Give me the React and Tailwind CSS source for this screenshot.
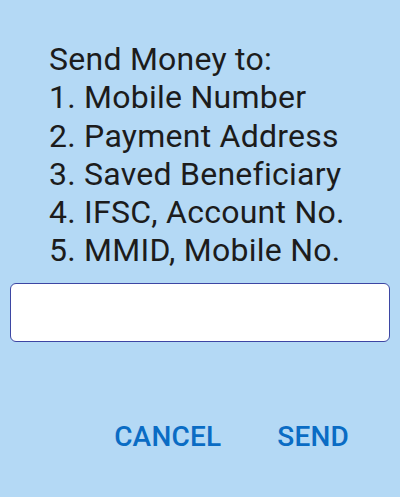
export default function App() {
  const lines = [
    "Send Money to:",
    "1. Mobile Number",
    "2. Payment Address",
    "3. Saved Beneficiary",
    "4. IFSC, Account No.",
    "5. MMID, Mobile No.",
  ];

  return (
    <div className="w-[400px] h-[497px] bg-[#b4d9f5] flex flex-col font-['Roboto',sans-serif]">
      {/* Prompt text */}
      <div className="pt-[40px] pl-[49px] text-[32px] leading-[38.3px] tracking-[0.25px] text-[#1c1c1c]">
        {lines.map((l) => (
          <div key={l}>{l}</div>
        ))}
      </div>

      {/* Input */}
      <div className="px-[10px] mt-[13px]">
        <input
          type="text"
          className="w-full h-[59px] bg-white border-[1.5px] border-[#3d46a3] rounded-[6px] outline-none px-3 text-[20px]"
        />
      </div>

      {/* Actions */}
      <div className="flex justify-end items-center gap-[56px] pr-[51px] mt-[74px]">
        <button className="text-[28px] font-medium text-[#0a6cc4] tracking-[0.2px]">CANCEL</button>
        <button className="text-[28px] font-medium text-[#0a6cc4] tracking-[0.2px]">SEND</button>
      </div>
    </div>
  );
}
